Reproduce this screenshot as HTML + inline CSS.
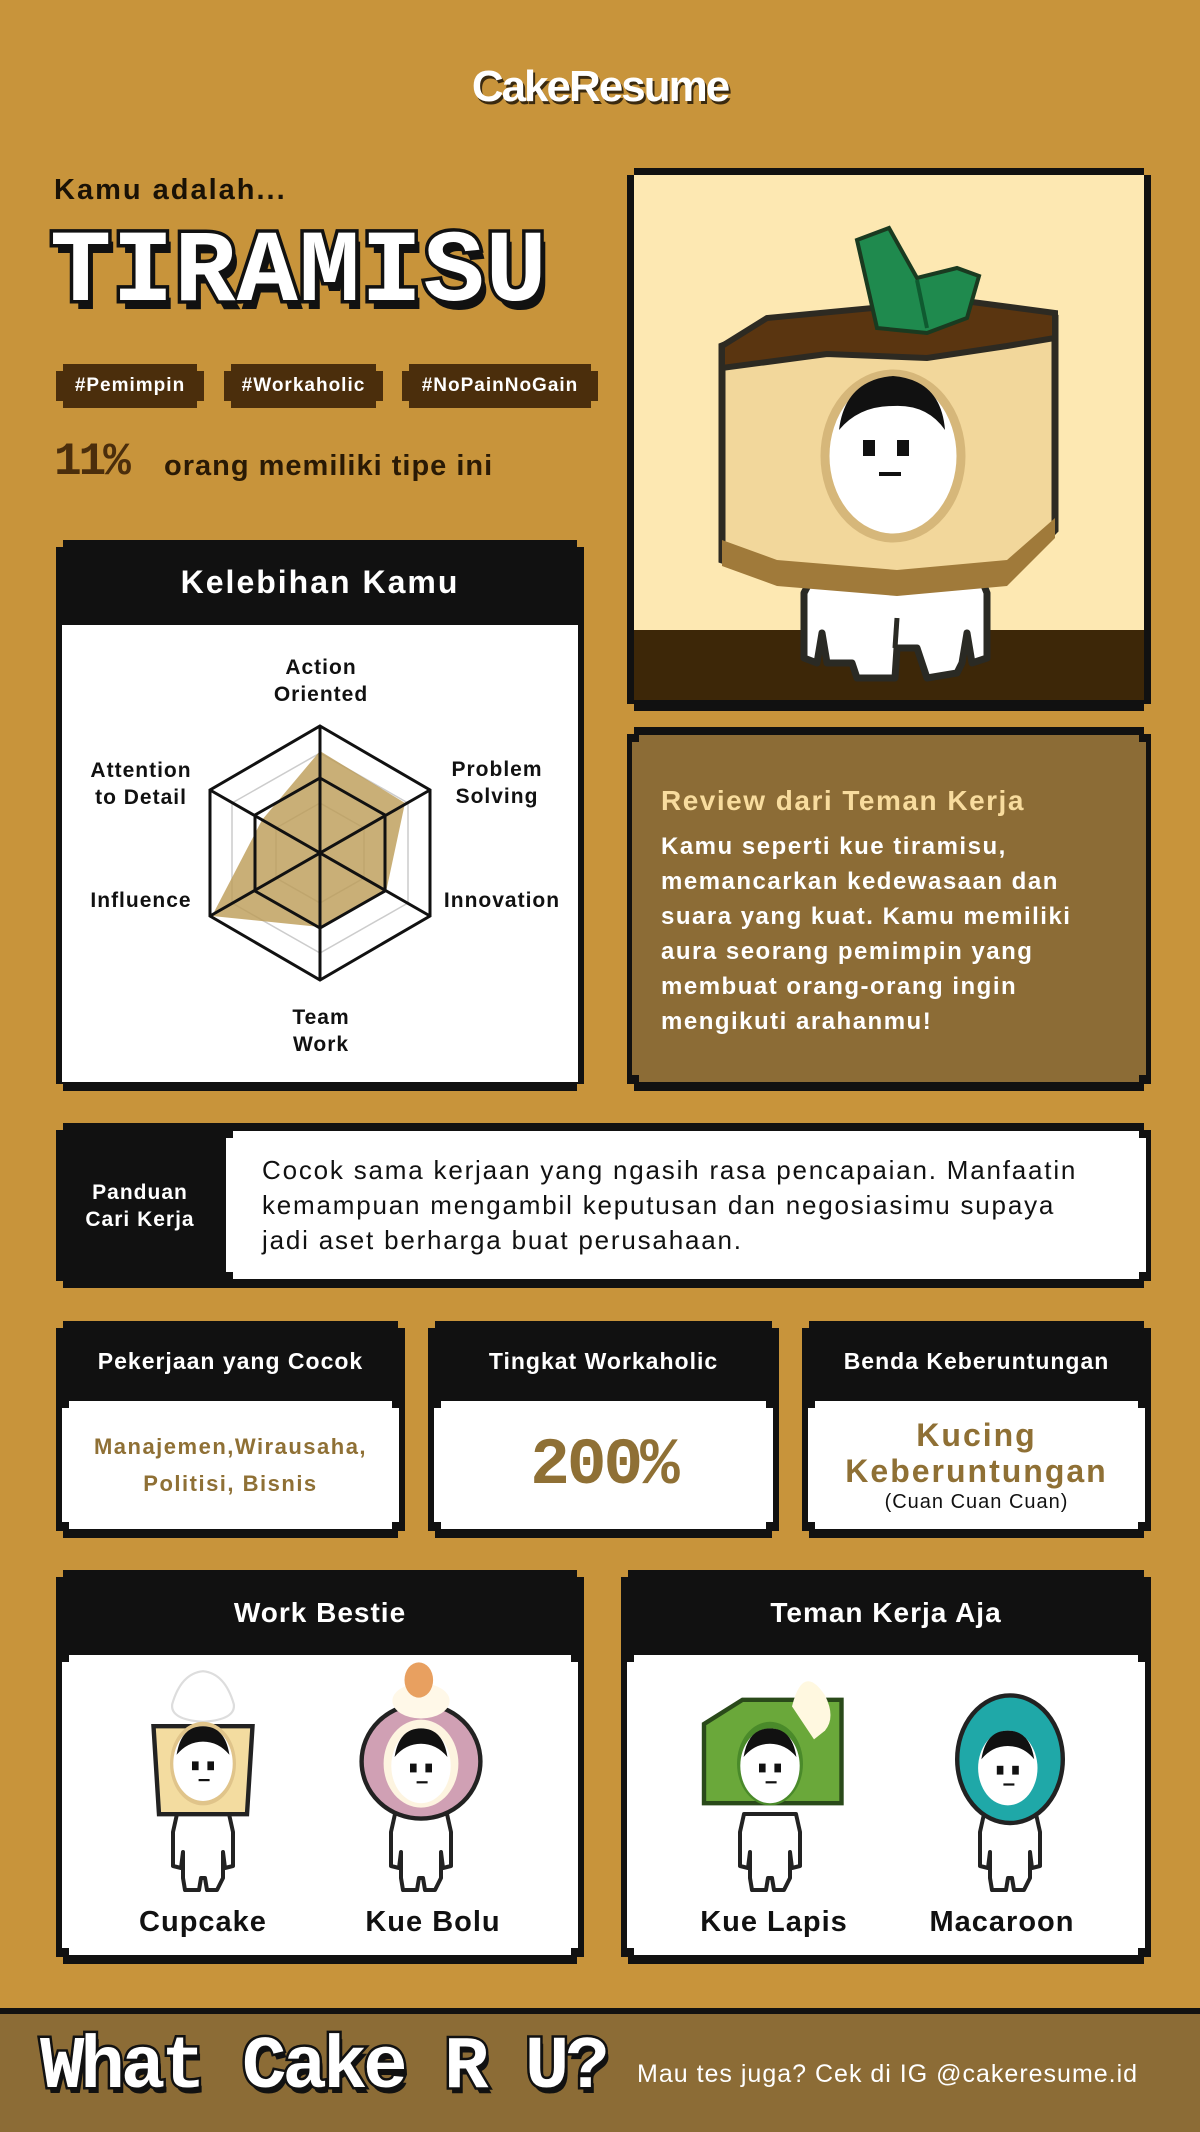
<!DOCTYPE html>
<html><head><meta charset="utf-8"><style>
*{margin:0;padding:0;box-sizing:border-box}
body{width:1200px;height:2132px;background:#c8943b;position:relative;overflow:hidden;font-family:"Liberation Sans",sans-serif;font-weight:bold;letter-spacing:1px}
.a{position:absolute}
.np{clip-path:polygon(7px 0,calc(100% - 7px) 0,calc(100% - 7px) 7px,100% 7px,100% calc(100% - 7px),calc(100% - 7px) calc(100% - 7px),calc(100% - 7px) 100%,7px 100%,7px calc(100% - 7px),0 calc(100% - 7px),0 7px,7px 7px)}
.card{position:absolute;background:#111}
.card .hd{position:absolute;left:0;right:0;top:0;color:#fff;display:flex;align-items:center;justify-content:center;text-align:center}
.card .bd{position:absolute;left:6px;right:6px;bottom:9px;background:#fff;display:flex;align-items:center;justify-content:center;flex-direction:column;text-align:center}
.tag{position:absolute;top:364px;height:44px;background:#4b2e0c;color:#fff;font-size:19px;display:flex;align-items:center;justify-content:center}
.lbl{position:absolute;font-size:21px;color:#111;text-align:center;line-height:27px;transform:translateX(-50%);white-space:nowrap}
.gold{color:#8f7035}
</style></head><body>

<div class="a" style="left:0;width:1200px;top:62px;text-align:center;font-size:44px;color:#fff;letter-spacing:-2px;text-shadow:2px 3px 0 #3a2a10">CakeResume</div>

<div class="a" style="left:54px;top:174px;font-size:29px;color:#1a1206;letter-spacing:2px">Kamu adalah...</div>
<div class="a" style="left:50px;top:218px;font-family:'Liberation Mono',monospace;font-size:102px;color:#fff;letter-spacing:1px;-webkit-text-stroke:7px #111;paint-order:stroke fill;text-shadow:5px 9px 0 #111;line-height:110px">TIRAMISU</div>

<div class="tag np" style="left:56px;width:148px">#Pemimpin</div>
<div class="tag np" style="left:224px;width:159px">#Workaholic</div>
<div class="tag np" style="left:402px;width:196px">#NoPainNoGain</div>

<div class="a" style="left:54px;top:436px;font-family:'Liberation Mono',monospace;font-size:46px;color:#4b2e0c;letter-spacing:-3px">11%</div>
<div class="a" style="left:164px;top:450px;font-size:29px;color:#2a1a05">orang memiliki tipe ini</div>

<div class="card np" style="left:627px;top:168px;width:524px;height:543px">
<svg width="524" height="543" viewBox="0 0 524 543" style="position:absolute;left:0;top:0">
<rect x="7" y="7" width="510" height="525" fill="#fde8b2"/>
<rect x="7" y="462" width="510" height="70" fill="#3d2708"/>
<path d="M190 400 L350 400 L360 425 L360 490 L345 495 L340 465 L335 495 L330 505 L300 510 L290 480 L270 480 L268 510 L230 510 L225 495 L200 495 L195 465 L190 495 L177 490 L177 425 Z" fill="#fff" stroke="#2a2a24" stroke-width="7" stroke-linejoin="round"/>
<path d="M268 480 L270 450" stroke="#2a2a24" stroke-width="5"/>
<path d="M95 178 L140 160 L330 140 L428 150 L428 362 L380 410 L270 420 L150 410 L95 392 Z" fill="#f2d79b" stroke="#2d2a22" stroke-width="7"/>
<path d="M95 372 L150 392 L270 402 L380 392 L428 350 L428 370 L380 418 L270 428 L150 418 L95 398 Z" fill="#a07a3a"/>
<path d="M95 178 L140 150 L330 132 L428 145 L428 170 L380 178 L300 190 L200 186 L95 200 Z" fill="#5a3510" stroke="#2d2a22" stroke-width="6"/>
<path d="M230 72 L262 60 L290 110 L330 100 L352 108 L340 150 L300 165 L250 160 Z" fill="#1f8a4e" stroke="#1a3a20" stroke-width="4"/>
<path d="M290 112 L300 160" stroke="#0f5a30" stroke-width="4"/>
<ellipse cx="266" cy="288" rx="68" ry="82" fill="#fff" stroke="#d6b77a" stroke-width="9"/>
<path d="M212 262 Q218 212 266 208 Q314 212 318 262 Q300 236 266 238 Q232 238 212 262Z" fill="#111"/>
<rect x="236" y="272" width="12" height="16" fill="#111"/><rect x="270" y="272" width="12" height="16" fill="#111"/>
<rect x="252" y="304" width="22" height="4" fill="#111"/>
</svg>
</div>

<div class="card np" style="left:56px;top:540px;width:528px;height:551px">
<div class="hd" style="height:85px;font-size:32px;letter-spacing:2px">Kelebihan Kamu</div>
<div class="bd" style="top:85px"></div>
</div>
<svg class="a" style="left:0;top:0" width="1200" height="1100" viewBox="0 0 1200 1100">
<g fill="none">
<polygon points="320,753 408,803 408,903 320,953 232,903 232,803" stroke="#ccc" stroke-width="1.5"/>
<polygon points="320,803 364,828 364,878 320,903 276,878 276,828" stroke="#ccc" stroke-width="1.5"/>
</g>
<polygon points="320,751 405,803 386,892 320,927 212,916 262,820" fill="#bb9b55" opacity="0.8"/>
<g fill="none" stroke="#111" stroke-width="3">
<polygon points="320,726 430,790 430,916 320,980 210,916 210,790"/>
<polygon points="320,778 385,815 385,891 320,928 255,891 255,815"/>
<line x1="320" y1="726" x2="320" y2="980"/><line x1="210" y1="790" x2="430" y2="916"/><line x1="430" y1="790" x2="210" y2="916"/></g>
</svg>
<div class="lbl" style="left:321px;top:654px">Action<br>Oriented</div>
<div class="lbl" style="left:497px;top:756px">Problem<br>Solving</div>
<div class="lbl" style="left:141px;top:757px">Attention<br>to Detail</div>
<div class="lbl" style="left:141px;top:887px">Influence</div>
<div class="lbl" style="left:502px;top:887px">Innovation</div>
<div class="lbl" style="left:321px;top:1004px">Team<br>Work</div>

<div class="card np" style="left:627px;top:727px;width:524px;height:364px">
<div class="np" style="position:absolute;left:5px;right:5px;top:8px;bottom:9px;background:#8c6c36"></div>
<div class="a" style="left:34px;top:58px;font-size:28px;color:#f8dc9e;letter-spacing:1.5px">Review dari Teman Kerja</div>
<div class="a" style="left:34px;top:102px;font-size:24px;color:#fff;line-height:35px;letter-spacing:1.5px;width:455px">Kamu seperti kue tiramisu, memancarkan kedewasaan dan suara yang kuat. Kamu memiliki aura seorang pemimpin yang membuat orang-orang ingin mengikuti arahanmu!</div>
</div>

<div class="card np" style="left:56px;top:1123px;width:1095px;height:165px">
<div class="a" style="left:0;top:0;width:168px;height:165px;display:flex;align-items:center;justify-content:center;text-align:center;color:#fff;font-size:21px;line-height:27px">Panduan<br>Cari Kerja</div>
<div class="np" style="position:absolute;left:170px;right:5px;top:8px;bottom:9px;background:#fff"></div>
<div class="a" style="left:206px;top:30px;font-size:26px;color:#111;line-height:35px;font-weight:normal;letter-spacing:1.8px;width:830px">Cocok sama kerjaan yang ngasih rasa pencapaian. Manfaatin kemampuan mengambil keputusan dan negosiasimu supaya jadi aset berharga buat perusahaan.</div>
</div>

<div class="card np" style="left:56px;top:1321px;width:349px;height:217px">
<div class="hd" style="height:80px;font-size:23px">Pekerjaan yang Cocok</div>
<div class="bd np gold" style="top:80px;font-size:22px;line-height:37px;letter-spacing:1.5px">Manajemen,Wirausaha,<br>Politisi, Bisnis</div>
</div>
<div class="card np" style="left:428px;top:1321px;width:351px;height:217px">
<div class="hd" style="height:80px;font-size:23px">Tingkat Workaholic</div>
<div class="bd np gold" style="top:80px;font-family:'Liberation Mono',monospace;font-size:66px;letter-spacing:-3px">200%</div>
</div>
<div class="card np" style="left:802px;top:1321px;width:349px;height:217px">
<div class="hd" style="height:80px;font-size:23px">Benda Keberuntungan</div>
<div class="bd np" style="top:80px"><div class="gold" style="font-size:32px;line-height:36px;letter-spacing:2px">Kucing<br>Keberuntungan</div><div style="font-size:20px;font-weight:normal;color:#111;margin-top:2px">(Cuan Cuan Cuan)</div></div>
</div>

<div class="card np" style="left:56px;top:1570px;width:528px;height:394px">
<div class="hd" style="height:85px;font-size:28px">Work Bestie</div>
<div class="bd np" style="top:85px"></div>
</div>
<div class="card np" style="left:621px;top:1570px;width:530px;height:394px">
<div class="hd" style="height:85px;font-size:28px">Teman Kerja Aja</div>
<div class="bd np" style="top:85px"></div>
</div>

<svg class="a" style="left:0;top:1660px" width="1200" height="240" viewBox="0 0 1200 240">
<defs>
<g id="bod">
<path d="M-26 2 L26 2 L30 20 L30 54 L22 56 L20 40 L20 66 L14 78 L4 78 L2 66 L-2 66 L-4 78 L-18 78 L-20 66 L-20 40 L-22 56 L-30 54 L-30 20 Z" fill="#fff" stroke="#222" stroke-width="4" stroke-linejoin="round"/>
</g>
<g id="face">
<ellipse cx="0" cy="0" rx="27" ry="34" fill="#fff"/>
<path d="M-24 -8 Q-20 -34 0 -34 Q20 -34 24 -8 Q14 -20 0 -20 Q-14 -20 -24 -8Z" fill="#111"/>
<rect x="-10" y="-2" width="6" height="8" fill="#111"/><rect x="4" y="-2" width="6" height="8" fill="#111"/>
<rect x="-4" y="14" width="10" height="2" fill="#111"/>
</g>
</defs>
<g transform="translate(203,16)">
<use href="#bod" transform="translate(0,136)"/>
<g transform="translate(0,136) scale(1.1) translate(0,-136)">
<path d="M-28 38 Q-20 10 0 8 Q20 10 28 38 Q30 52 0 54 Q-30 52 -28 38Z" fill="#fff" stroke="#ddd" stroke-width="2"/>
<path d="M-45 58 L45 58 L40 138 L-40 138 Z" fill="#f3dca0" stroke="#222" stroke-width="4"/>
<ellipse cx="0" cy="92" rx="30" ry="38" fill="#e0c48a"/>
<use href="#face" transform="translate(0,92)"/>
</g></g>
<g transform="translate(421,16)">
<use href="#bod" transform="translate(0,136)"/>
<g transform="translate(0,136) scale(1.1) translate(0,-136)">
<ellipse cx="0" cy="90" rx="54" ry="52" fill="#d0a0b4" stroke="#222" stroke-width="4"/>
<ellipse cx="0" cy="92" rx="34" ry="40" fill="#fdf4e0"/>
<use href="#face" transform="translate(0,94)"/>
<ellipse cx="0" cy="35" rx="26" ry="16" fill="#fff8e8"/>
<ellipse cx="-2" cy="16" rx="13" ry="16" fill="#e8a060"/>
</g></g>
<g transform="translate(770,16)">
<use href="#bod" transform="translate(0,136)"/>
<g transform="translate(0,136) scale(1.1) translate(0,-136)">
<path d="M-60 56 L-25 34 L65 34 L65 128 L-60 128 Z" fill="#6aa83a" stroke="#2a4a1a" stroke-width="4"/>
<ellipse cx="0" cy="92" rx="30" ry="38" fill="#4a8a2a"/>
<use href="#face" transform="translate(0,94)"/>
<path d="M20 40 Q30 0 50 30 Q60 50 50 62 L40 70 Q30 55 20 40Z" fill="#fff8e0"/>
</g></g>
<g transform="translate(1010,16)">
<use href="#bod" transform="translate(0,136)"/>
<g transform="translate(0,136) scale(1.1) translate(0,-136)">
<ellipse cx="0" cy="88" rx="48" ry="58" fill="#1fa8a8" stroke="#222" stroke-width="4"/>
<use href="#face" transform="translate(-2,96)"/>
</g></g>
</svg>
<div class="a" style="left:203px;top:1906px;font-size:29px;color:#111;transform:translateX(-50%)">Cupcake</div>
<div class="a" style="left:433px;top:1906px;font-size:29px;color:#111;transform:translateX(-50%)">Kue Bolu</div>
<div class="a" style="left:774px;top:1906px;font-size:29px;color:#111;transform:translateX(-50%)">Kue Lapis</div>
<div class="a" style="left:1002px;top:1906px;font-size:29px;color:#111;transform:translateX(-50%)">Macaroon</div>

<div class="a" style="left:0;top:2008px;width:1200px;height:124px;background:#8c6c36;border-top:6px solid #111"></div>
<div class="a" style="left:40px;top:2028px;font-family:'Liberation Mono',monospace;font-size:74px;color:#fff;letter-spacing:-4px;-webkit-text-stroke:5px #111;paint-order:stroke fill;text-shadow:3px 6px 0 #111;line-height:80px">What Cake R U?</div>
<div class="a" style="left:637px;top:2060px;font-size:25px;color:#fff;font-weight:normal;letter-spacing:1px">Mau tes juga? Cek di IG @cakeresume.id</div>
</body></html>
